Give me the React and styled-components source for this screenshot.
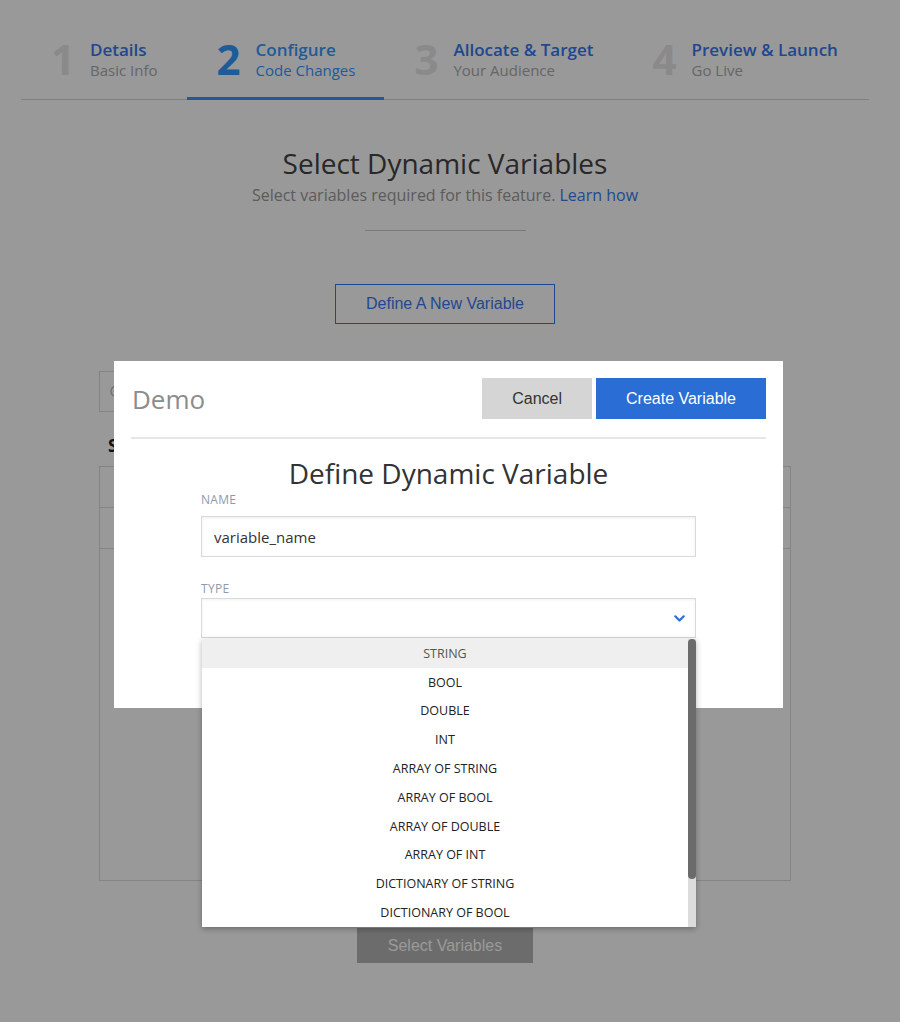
import React from "react";
import styled, { createGlobalStyle } from "styled-components";
import { Search } from "lucide-react";

const GlobalStyle = createGlobalStyle`
  html, body { margin: 0; padding: 0; background: #fff; }
  body { font-family: "Open Sans", "Noto Sans", sans-serif; }
  * { box-sizing: border-box; }
`;

const Page = styled.div`
  width: 890px;
  min-height: 1022px;
  padding-top: 38px;
  display: flex;
  flex-direction: column;
  align-items: center;
`;

const Stepper = styled.div`
  width: 848px;
  display: flex;
  border-bottom: 1px solid #d5d5d5;
`;

const Step = styled.div`
  flex-shrink: 0;
  display: flex;
  align-items: center;
  gap: 15px;
  padding: 0 29px 17px 30px;
  margin-bottom: -1px;
  white-space: nowrap;
  border-bottom: 3px solid ${(p) => (p.$active ? "#3399ff" : "transparent")};
`;

const StepNum = styled.div`
  font-size: 42px;
  font-weight: 700;
  line-height: 1;
  color: ${(p) => (p.$active ? "#3399ff" : "#e6e6e6")};
`;

const StepText = styled.div`
  display: flex;
  flex-direction: column;
`;

const StepTitle = styled.div`
  font-size: 17px;
  font-weight: 600;
  line-height: 21px;
  color: ${(p) => (p.$active ? "#3399ff" : "#3578ee")};
`;

const StepSub = styled.div`
  font-size: 15px;
  line-height: 20px;
  color: ${(p) => (p.$active ? "#3399ff" : "#aaaaaa")};
`;

const Heading = styled.h1`
  margin: 44px 0 0;
  font-size: 28px;
  font-weight: 400;
  line-height: 38px;
  color: #444;
`;

const Lead = styled.p`
  margin: 3px 0 0;
  font-size: 16px;
  line-height: 20px;
  color: #999;
`;

const Link = styled.a`
  color: #3a7af0;
  text-decoration: none;
`;

const Rule = styled.div`
  width: 161px;
  height: 1px;
  margin-top: 25px;
  background: #cdcdcd;
`;

const OutlineButton = styled.button`
  margin-top: 53px;
  width: 220px;
  height: 40px;
  border: 1.5px solid #3a78f2;
  background: #fff;
  color: #3a78f2;
  font-family: "Liberation Sans", Arial, sans-serif;
  font-size: 16px;
`;

const Section = styled.div`
  width: 692px;
  margin-top: 47px;
  display: flex;
  flex-direction: column;
`;

const SearchBox = styled.div`
  width: 320px;
  height: 41px;
  border: 1px solid #ddd;
  display: flex;
  align-items: center;
  padding-left: 9px;
  color: #bbb;
`;

const SectionTitle = styled.h2`
  margin: 23px 0 0;
  padding-left: 9px;
  font-size: 17px;
  font-weight: 700;
  line-height: 22px;
  color: #222;
`;

const Table = styled.div`
  margin-top: 9px;
  height: 415px;
  border: 1px solid #ddd;
  display: flex;
  flex-direction: column;
`;

const TableRow = styled.div`
  height: 41px;
  flex-shrink: 0;
  border-bottom: 1px solid #ddd;
`;

const DisabledButton = styled.button`
  margin-top: 47px;
  width: 176px;
  height: 35px;
  border: none;
  background: #b4b4b4;
  color: #fff;
  font-family: "Liberation Sans", Arial, sans-serif;
  font-size: 16px;
`;

const Overlay = styled.div`
  position: fixed;
  inset: 0;
  background: rgba(0, 0, 0, 0.4);
  z-index: 10;
`;

const Modal = styled.div`
  position: absolute;
  top: 361px;
  left: 114px;
  width: 669px;
  background: #fff;
  padding: 17px 17px 70px;
`;

const ModalHeader = styled.div`
  display: flex;
  align-items: center;
  justify-content: space-between;
  padding-left: 1px;
`;

const ModalName = styled.div`
  font-size: 26px;
  line-height: 1;
  color: #8c8c8c;
`;

const Actions = styled.div`
  display: flex;
  gap: 4px;
`;

const ActionButton = styled.button`
  height: 41px;
  padding: 0 30px;
  border: none;
  font-family: "Liberation Sans", Arial, sans-serif;
  font-size: 16px;
  background: ${(p) => (p.$primary ? "#2a6dd4" : "#d5d5d5")};
  color: ${(p) => (p.$primary ? "#fff" : "#333")};
`;

const ModalDivider = styled.div`
  height: 2px;
  margin-top: 18px;
  background: #e6e6e6;
`;

const ModalTitle = styled.h2`
  margin: 18px 0 0;
  text-align: center;
  font-size: 28px;
  font-weight: 400;
  line-height: 32px;
  color: #333;
`;

const Form = styled.div`
  width: 495px;
  margin: 0 auto;
  padding-top: 3px;
  display: flex;
  flex-direction: column;
`;

const Field = styled.div`
  display: flex;
  flex-direction: column;
  margin-top: ${(p) => p.$top || 0}px;
`;

const Label = styled.label`
  font-size: 12px;
  line-height: 16px;
  letter-spacing: 0.3px;
  color: #8f9aab;
  margin-bottom: ${(p) => p.$gap}px;
`;

const TextInput = styled.input`
  height: 41px;
  border: 1px solid #d9d9d9;
  box-shadow: inset 0 1px 3px rgba(0, 0, 0, 0.08);
  padding: 0 12px;
  font-family: "Open Sans", sans-serif;
  font-size: 15px;
  color: #333;
  outline: none;
`;

const SelectBox = styled.div`
  position: relative;
  height: 40px;
  border: 1px solid #d9d9d9;
  box-shadow: inset 0 1px 3px rgba(0, 0, 0, 0.06);
  display: flex;
  align-items: center;
  justify-content: flex-end;
  padding-right: 10px;
`;

const Dropdown = styled.div`
  position: absolute;
  top: calc(100% + 2px);
  left: 0;
  right: -1px;
  height: 288px;
  display: flex;
  background: #fff;
  box-shadow: 0 2px 6px rgba(0, 0, 0, 0.3);
  z-index: 2;
`;

const OptionList = styled.div`
  flex: 1;
  overflow: hidden;
`;

const ScrollTrack = styled.div`
  width: 8px;
  background: #dcdcdc;
  display: flex;
  flex-direction: column;
`;

const ScrollThumb = styled.div`
  height: 240px;
  background: #6b6b6b;
  border-radius: 4px;
`;

const Option = styled.div`
  height: 28.8px;
  display: flex;
  align-items: center;
  justify-content: center;
  font-size: 12.5px;
  color: ${(p) => (p.$hover ? "#555" : "#222")};
  background: ${(p) => (p.$hover ? "#efefef" : "#fff")};
`;

const steps = [
  { n: 1, t: "Details", s: "Basic Info" },
  { n: 2, t: "Configure", s: "Code Changes", active: true },
  { n: 3, t: "Allocate & Target", s: "Your Audience" },
  { n: 4, t: "Preview & Launch", s: "Go Live" },
];

const types = [
  "STRING",
  "BOOL",
  "DOUBLE",
  "INT",
  "ARRAY OF STRING",
  "ARRAY OF BOOL",
  "ARRAY OF DOUBLE",
  "ARRAY OF INT",
  "DICTIONARY OF STRING",
  "DICTIONARY OF BOOL",
  "DICTIONARY OF DOUBLE",
  "DICTIONARY OF INT",
];

const Chevron = () => (
  <svg width="11" height="7" viewBox="0 0 11 7">
    <polyline
      points="1.3,1.3 5.5,5.5 9.7,1.3"
      fill="none"
      stroke="#2a6fd6"
      strokeWidth="2.2"
      strokeLinecap="round"
      strokeLinejoin="round"
    />
  </svg>
);

export default function App() {
  return (
    <>
      <GlobalStyle />
      <Page>
        <Stepper>
          {steps.map((s) => (
            <Step key={s.n} $active={s.active}>
              <StepNum $active={s.active}>{s.n}</StepNum>
              <StepText>
                <StepTitle $active={s.active}>{s.t}</StepTitle>
                <StepSub $active={s.active}>{s.s}</StepSub>
              </StepText>
            </Step>
          ))}
        </Stepper>
        <Heading>Select Dynamic Variables</Heading>
        <Lead>
          Select variables required for this feature. <Link href="#">Learn how</Link>
        </Lead>
        <Rule />
        <OutlineButton>Define A New Variable</OutlineButton>
        <Section>
          <SearchBox>
            <Search size={16} strokeWidth={2} />
          </SearchBox>
          <SectionTitle>Selected Variables</SectionTitle>
          <Table>
            <TableRow />
            <TableRow />
          </Table>
        </Section>
        <DisabledButton disabled>Select Variables</DisabledButton>
      </Page>
      <Overlay>
        <Modal>
          <ModalHeader>
            <ModalName>Demo</ModalName>
            <Actions>
              <ActionButton>Cancel</ActionButton>
              <ActionButton $primary>Create Variable</ActionButton>
            </Actions>
          </ModalHeader>
          <ModalDivider />
          <ModalTitle>Define Dynamic Variable</ModalTitle>
          <Form>
            <Field>
              <Label $gap={8}>NAME</Label>
              <TextInput defaultValue="variable_name" />
            </Field>
            <Field $top={24}>
              <Label $gap={1}>TYPE</Label>
              <SelectBox>
                <Chevron />
                <Dropdown>
                  <OptionList>
                    {types.map((t, i) => (
                      <Option key={t} $hover={i === 0}>
                        {t}
                      </Option>
                    ))}
                  </OptionList>
                  <ScrollTrack>
                    <ScrollThumb />
                  </ScrollTrack>
                </Dropdown>
              </SelectBox>
            </Field>
          </Form>
        </Modal>
      </Overlay>
    </>
  );
}
